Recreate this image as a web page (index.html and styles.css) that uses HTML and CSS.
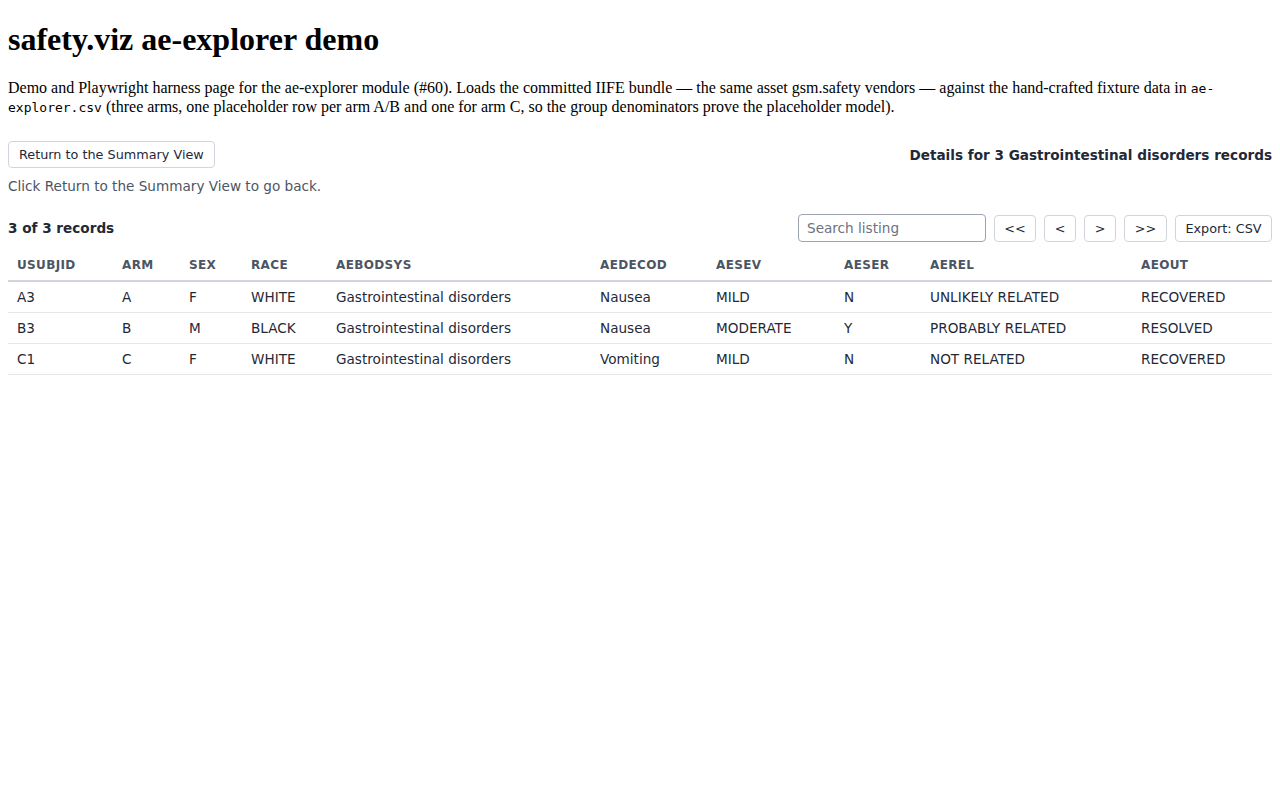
FILE: index.html
```html
<!DOCTYPE html>
<html lang="en">
<head>
<meta charset="utf-8">
<title>safety.viz ae-explorer demo</title>
<link rel="stylesheet" href="styles.css">
</head>
<body>
<h1 class="page-title">safety.viz ae-explorer demo</h1>
<p class="intro">Demo and Playwright harness page for the ae-explorer module (#60). Loads the committed IIFE bundle — the same asset gsm.safety vendors — against the hand-crafted fixture data in <code>ae-explorer.csv</code> (three arms, one placeholder row per arm A/B and one for arm C, so the group denominators prove the placeholder model).</p>

<div class="ae-explorer">
  <div class="detail-header">
    <button class="btn" type="button">Return to the Summary View</button>
    <div class="detail-title">Details for 3 Gastrointestinal disorders records</div>
  </div>
  <div class="detail-note">Click Return to the Summary View to go back.</div>

  <div class="listing-toolbar">
    <div class="record-count">3 of 3 records</div>
    <div class="toolbar-controls">
      <input class="search" type="text" placeholder="Search listing">
      <button class="btn btn-page btn-first" type="button">&lt;&lt;</button>
      <button class="btn btn-page" type="button">&lt;</button>
      <button class="btn btn-page" type="button">&gt;</button>
      <button class="btn btn-page btn-last" type="button">&gt;&gt;</button>
      <button class="btn btn-export" type="button">Export: CSV</button>
    </div>
  </div>

  <table class="listing">
    <colgroup>
      <col class="c-usubjid"><col class="c-arm"><col class="c-sex"><col class="c-race"><col class="c-bodsys">
      <col class="c-decod"><col class="c-sev"><col class="c-ser"><col class="c-rel"><col class="c-out">
    </colgroup>
    <thead>
      <tr>
        <th>USUBJID</th><th>ARM</th><th>SEX</th><th>RACE</th><th>AEBODSYS</th>
        <th>AEDECOD</th><th>AESEV</th><th>AESER</th><th>AEREL</th><th>AEOUT</th>
      </tr>
    </thead>
    <tbody>
      <tr>
        <td>A3</td><td>A</td><td>F</td><td>WHITE</td><td>Gastrointestinal disorders</td>
        <td>Nausea</td><td>MILD</td><td>N</td><td>UNLIKELY RELATED</td><td>RECOVERED</td>
      </tr>
      <tr>
        <td>B3</td><td>B</td><td>M</td><td>BLACK</td><td>Gastrointestinal disorders</td>
        <td>Nausea</td><td>MODERATE</td><td>Y</td><td>PROBABLY RELATED</td><td>RESOLVED</td>
      </tr>
      <tr>
        <td>C1</td><td>C</td><td>F</td><td>WHITE</td><td>Gastrointestinal disorders</td>
        <td>Vomiting</td><td>MILD</td><td>N</td><td>NOT RELATED</td><td>RECOVERED</td>
      </tr>
    </tbody>
  </table>
</div>
</body>
</html>
```

FILE: styles.css
```css
body {
  margin: 8px;
  font-family: "Liberation Serif", "Times New Roman", serif;
  font-size: 16px;
  color: #000;
  background: #fff;
}

.page-title {
  font-size: 32px;
  font-weight: bold;
  margin: 13px 0 21px;
}

.intro {
  margin: 16px 0;
  line-height: 18px;
}

.intro code {
  font-family: "DejaVu Sans Mono", monospace;
  font-size: 13px;
}

/* explorer widget */
.ae-explorer {
  font-family: "DejaVu Sans", sans-serif;
  font-size: 13.6px;
  color: #1f2937;
  margin-top: 24px;
}

.detail-header {
  display: flex;
  justify-content: space-between;
  align-items: center;
}

.detail-title {
  font-weight: bold;
}

.btn {
  font-family: "DejaVu Sans", sans-serif;
  font-size: 12.8px;
  color: #1f2937;
  background: #fff;
  border: 1px solid #d1d5db;
  border-radius: 4px;
  height: 27px;
  padding: 0 10px;
  cursor: pointer;
}

.detail-note {
  color: #4b5563;
  margin-top: 9px;
  line-height: 18px;
}

.listing-toolbar {
  display: flex;
  justify-content: space-between;
  align-items: center;
  margin-top: 19px;
}

.record-count {
  font-weight: bold;
}

.toolbar-controls {
  display: flex;
  align-items: center;
  gap: 8px;
}

.search {
  width: 188px;
  height: 28px;
  box-sizing: border-box;
  border: 1px solid #9ca3af;
  border-radius: 4px;
  padding: 0 8px;
  font-family: "DejaVu Sans", sans-serif;
  font-size: 13.6px;
  color: #1f2937;
}

.search::placeholder {
  color: #6b7280;
}

.btn-page {
  width: 32px;
  padding: 0;
}

.btn-first {
  width: 42px;
}

.btn-last {
  width: 43px;
}

.btn-export {
  width: 97px;
  padding: 0;
}

/* listing table */
.listing {
  width: 100%;
  table-layout: fixed;
  border-collapse: collapse;
  margin-top: 11px;
}

.c-usubjid { width: 105px; }
.c-arm { width: 67px; }
.c-sex { width: 62px; }
.c-race { width: 85px; }
.c-bodsys { width: 264px; }
.c-decod { width: 116px; }
.c-sev { width: 128px; }
.c-ser { width: 86px; }
.c-rel { width: 211px; }
.c-out { width: 140px; }

.listing th {
  text-align: left;
  font-size: 12px;
  font-weight: bold;
  color: #4b5563;
  letter-spacing: 0.03em;
  padding: 5px 9px 8px;
  border-bottom: 2px solid #d1d5db;
}

.listing td {
  padding: 7px 9px;
  line-height: 16px;
  border-bottom: 1px solid #e5e7eb;
  white-space: nowrap;
}
```
